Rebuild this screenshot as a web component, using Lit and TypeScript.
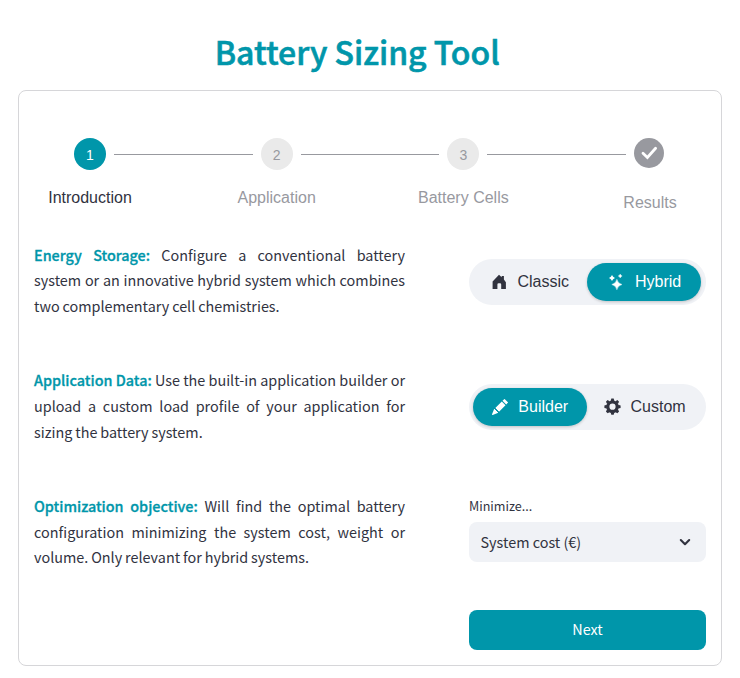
import { LitElement, html, css, svg } from "lit";
import { customElement } from "lit/decorators.js";
import { classMap } from "lit/directives/class-map.js";

const ICONS = {
  house: svg`<path d="M8 .7 L10.7 3.3 V1.9 H12.9 V5.5 L14.9 8.2 V15 H10.2 V10.6 Q10.2 9.3 9 9.3 H7.6 Q6.4 9.3 6.4 10.6 V15 H1.6 V7.4 Z"/>`,
  stars: svg`<path d="M8.9 5.3 Q9.9 9.5 14 10.5 Q9.9 11.5 8.9 15.8 Q7.9 11.5 3.8 10.5 Q7.9 9.5 8.9 5.3Z" stroke="currentColor" stroke-width=".4"/><path d="M4 .9 Q4.8 3.1 7 3.9 Q4.8 4.7 4 6.9 Q3.2 4.7 1 3.9 Q3.2 3.1 4 .9Z"/><path d="M12.2 0 Q12.8 1.5 14.2 2 Q12.8 2.5 12.2 4 Q11.6 2.5 10.2 2 Q11.6 1.5 12.2 0Z" stroke="currentColor" stroke-width=".3"/>`,
  pencil: svg`<path d="M12.85.15a.5.5 0 0 0-.7 0L10.5 1.8 14.2 5.5l1.65-1.65a.5.5 0 0 0 0-.7zM13.5 6.2 9.8 2.5 3.3 9h.2a.5.5 0 0 1 .5.5v.5h.5a.5.5 0 0 1 .5.5v.5h.5a.5.5 0 0 1 .5.5v.5h.5a.5.5 0 0 1 .5.5v.2zM6.03 13.69A.5.5 0 0 1 6 13.5V13h-.5a.5.5 0 0 1-.5-.5V12h-.5a.5.5 0 0 1-.5-.5V11h-.5a.5.5 0 0 1-.5-.5V10h-.5a.5.5 0 0 1-.18-.03l-.18.18a.5.5 0 0 0-.11.16l-2 5a.5.5 0 0 0 .65.65l5-2a.5.5 0 0 0 .17-.11z"/>`,
  gear: svg`<g transform="translate(8.5 7.7)"><circle r="4.7" fill="none" stroke="currentColor" stroke-width="3.2"/>${[0, 45, 90, 135, 180, 225, 270, 315].map(
    (a) => svg`<path transform="rotate(${a})" d="M-1.9 -5.6 L-1.2 -8.1 H1.2 L1.9 -5.6Z"/>`
  )}</g>`,
};

type IconName = keyof typeof ICONS;
type Option = { label: string; icon: IconName };

@customElement("app-root")
export class AppRoot extends LitElement {
  static styles = css`
    :host {
      display: block;
      box-sizing: border-box;
      height: 678px;
      padding: 18px 18px 0;
      background: #fff;
      color: #31333f;
      font-family: "Noto Sans CJK SC", sans-serif;
      font-size: 14.4px;
      overflow: hidden;
    }
    * { box-sizing: border-box; }
    .title {
      margin: 0;
      height: 72px;
      padding-right: 25.5px;
      text-align: center;
      color: #0096aa;
      font-size: 32px;
      line-height: 66px;
      font-weight: 500;
      -webkit-text-stroke: .6px #0096aa;
    }
    .card {
      height: 576px;
      border: 1px solid #d6d6d9;
      border-radius: 8px;
      padding: 47px 15px 0;
    }
    .stepper {
      display: flex;
      margin: 0 40px;
      height: 103.7px;
      font-family: "Liberation Sans", sans-serif;
      font-size: 16px;
      color: #98999f;
    }
    .step {
      width: 32px;
      display: flex;
      flex-direction: column;
      align-items: center;
    }
    .dot {
      width: 32px;
      height: 32px;
      border-radius: 50%;
      background: #eaeaea;
      font-size: 14px;
      line-height: 34px;
      text-align: center;
    }
    .step.active { color: #31333f; }
    .step.active .dot { background: #0096aa; color: #fff; }
    .check { width: 30px; height: 30px; align-self: flex-start; }
    .label { white-space: nowrap; line-height: 24px; margin-top: 16px; }
    .step.final .label { margin-top: 23px; }
    .line { flex: 1; height: 1px; margin: 16px 8px 0; background: #98999f; }
    .row {
      display: grid;
      grid-template-columns: 371px 237px;
      justify-content: space-between;
      height: 125.7px;
    }
    .copy { margin: 0; line-height: 25.6px; text-align: justify; word-spacing: -.35px; }
    .copy b { color: #0096aa; font-weight: 500; -webkit-text-stroke: .3px #0096aa; }
    .toggle {
      display: flex;
      height: 46px;
      margin-top: 17.3px;
      padding: 4px;
      border-radius: 23px;
      background: #f0f2f6;
      font-family: "Liberation Sans", sans-serif;
      font-size: 16px;
    }
    .row + .row .toggle { margin-top: 16.6px; }
    .option {
      flex: 0 0 114px;
      height: 38px;
      display: flex;
      align-items: center;
      justify-content: center;
      gap: 10.5px;
      border-radius: 19px;
    }
    .option + .option { padding-left: 1.6px; }
    .option.on { background: #0096aa; color: #fff; box-shadow: 0 1px 3px rgba(0, 0, 0, .2); }
    .icon { width: 16px; height: 16px; fill: currentColor; overflow: visible; }
    .field { display: block; font-size: 12.6px; line-height: 20px; padding-top: 2.7px; }
    .select {
      height: 40px;
      margin-top: 6px;
      padding: 0 14px 0 11.5px;
      display: flex;
      align-items: center;
      justify-content: space-between;
      border-radius: 8px;
      background: #f0f2f6;
    }
    .select span { line-height: 20px; padding-top: .8px; }
    .chevron { width: 14px; height: 14px; }
    .next {
      display: block;
      width: 237px;
      height: 40px;
      margin: -8.8px 0 0 auto;
      padding: 0 0 3px;
      border: 0;
      border-radius: 8px;
      background: #0096aa;
      color: #fff;
      font: inherit;
    }
  `;

  private steps = ["Introduction", "Application", "Battery Cells"];

  private toggle(options: Option[], selected: number) {
    return html`<div class="toggle">
      ${options.map(
        (o, i) => html`<div class=${classMap({ option: true, on: i === selected })}>
          <svg class="icon" viewBox="0 0 16 16">${ICONS[o.icon]}</svg><span>${o.label}</span>
        </div>`
      )}
    </div>`;
  }

  render() {
    return html`
      <h1 class="title">Battery Sizing Tool</h1>
      <main class="card">
        <div class="stepper">
          ${this.steps.map(
            (label, i) => html`<div class=${classMap({ step: true, active: i === 0 })}>
                <div class="dot">${i + 1}</div>
                <div class="label">${label}</div>
              </div>
              <div class="line"></div>`
          )}
          <div class="step final">
            <svg class="check" viewBox="0 0 30 30">
              <circle cx="15" cy="15" r="15" fill="#98999f" />
              <path d="M9 15.2 L13.4 19.4 L21.6 10.2" fill="none" stroke="#fff" stroke-width="2.8" stroke-linecap="round" />
            </svg>
            <div class="label">Results</div>
          </div>
        </div>
        <section class="row">
          <p class="copy"><b>Energy Storage:</b> Configure a conventional battery system or an innovative hybrid system which combines two complementary cell chemistries.</p>
          ${this.toggle([{ label: "Classic", icon: "house" }, { label: "Hybrid", icon: "stars" }], 1)}
        </section>
        <section class="row">
          <p class="copy"><b>Application Data:</b> Use the built-in application builder or upload a custom load profile of your application for sizing the battery system.</p>
          ${this.toggle([{ label: "Builder", icon: "pencil" }, { label: "Custom", icon: "gear" }], 0)}
        </section>
        <section class="row">
          <p class="copy"><b>Optimization objective:</b> Will find the optimal battery configuration minimizing the system cost, weight or volume. Only relevant for hybrid systems.</p>
          <div>
            <span class="field">Minimize...</span>
            <div class="select">
              <span>System cost (€)</span>
              <svg class="chevron" viewBox="0 0 14 14"><path d="M2.8 5 L7 9.2 L11.2 5" fill="none" stroke="#31333f" stroke-width="2.1" stroke-linecap="round" stroke-linejoin="round" /></svg>
            </div>
          </div>
        </section>
        <button class="next">Next</button>
      </main>
    `;
  }
}
